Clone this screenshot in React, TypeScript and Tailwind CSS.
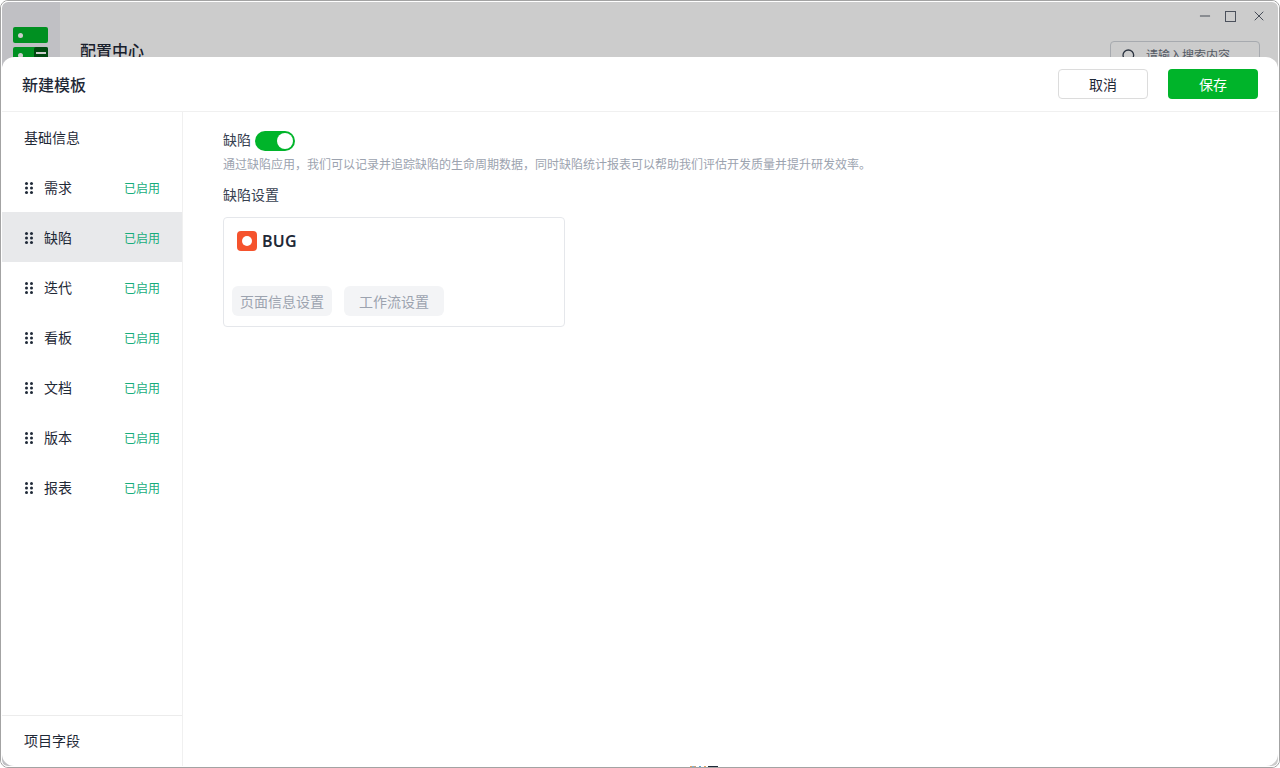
import { Minus, X, Search } from "lucide-react";

const FONT = "font-['Inter','Noto_Sans_CJK_SC',sans-serif]";
const items = ["需求", "缺陷", "迭代", "看板", "文档", "版本", "报表"];

function Grip() {
  return (
    <svg width="10" height="14" viewBox="0 0 10 14" className="mt-[2px] shrink-0 text-[#1f2937]" fill="currentColor">
      <circle cx="2.5" cy="2.5" r="1.5" />
      <circle cx="7.5" cy="2.5" r="1.5" />
      <circle cx="2.5" cy="7" r="1.5" />
      <circle cx="7.5" cy="7" r="1.5" />
      <circle cx="2.5" cy="11.5" r="1.5" />
      <circle cx="7.5" cy="11.5" r="1.5" />
    </svg>
  );
}

export default function App() {
  return (
    <div className={`relative h-[768px] w-[1280px] overflow-hidden bg-white ${FONT}`}>
      {/* Window frame: grey outer line, white inner line */}
      <div className="h-full w-full rounded-[8px] border border-[#a3a3a3]">
        <div className="relative h-full w-full overflow-hidden rounded-[7px] border border-white bg-white">
          {/* Underlying page */}
          <div className="flex h-full w-full">
            <div className="flex w-[58px] shrink-0 flex-col items-center gap-[4px] bg-[#f0f1f5] pr-[2px] pt-[25px]">
              <div className="flex h-[16px] w-[35px] items-center rounded-[2px] bg-[#00b42a] pl-[5px]">
                <span className="h-[5px] w-[5px] rounded-full bg-white" />
              </div>
              <div className="flex h-[16px] w-[35px] items-center justify-between rounded-[2px] bg-[#00b42a] pl-[5px]">
                <span className="h-[5px] w-[5px] rounded-full bg-white" />
                <span className="flex h-[16px] w-[14px] items-start justify-center rounded-[2px] bg-[#005a15] pt-[5px]">
                  <span className="h-[2px] w-[10px] bg-white" />
                </span>
              </div>
            </div>
            <div className="flex min-w-0 flex-1 flex-col">
              <div className="flex h-[21px] items-center justify-end gap-[12px] pr-[11px] pt-[7px] text-[#374151]">
                <Minus size={16} strokeWidth={1.25} />
                <span className="mr-[3px] h-[11px] w-[11px] border border-[#5f6673]" />
                <X size={16} strokeWidth={1.25} />
              </div>
              <div className="flex items-start justify-between pl-[20px] pr-[18px] pt-[16px]">
                <span className="text-[16px] font-medium leading-[24px] text-[#1f2937]">配置中心</span>
                <div className="mt-[2px] flex h-[30px] w-[150px] items-center gap-[9px] rounded-[4px] border border-[#d1d5db] px-[10px]">
                  <Search size={16} className="text-[#374151]" />
                  <span className="text-[12px] text-[#6b7280]">请输入搜索内容</span>
                </div>
              </div>
            </div>
          </div>

          {/* Backdrop and modal */}
          <div className="absolute inset-0 flex flex-col bg-black/20 pt-[55px]">
            <div className="flex min-h-0 flex-1 flex-col overflow-hidden rounded-[12px] bg-white">
              <header className="flex h-[55px] shrink-0 items-center justify-between border-b border-[#f0f0f0] px-[20px]">
                <h1 className="mt-[2px] text-[16px] font-medium text-[#1f2937]">新建模板</h1>
                <div className="flex gap-[20px]">
                  <button className="h-[30px] w-[90px] rounded-[4px] border border-[#dcdcdc] bg-white pt-[1px] text-[14px] text-[#1f2937]">取消</button>
                  <button className="h-[30px] w-[90px] rounded-[4px] bg-[#00b42a] pt-[1px] text-[14px] text-white">保存</button>
                </div>
              </header>
              <div className="flex min-h-0 flex-1">
                <aside className="flex w-[181px] shrink-0 flex-col border-r border-[#f0f0f0]">
                  <div className="flex h-[50px] items-center pl-[22px] pt-[1px] text-[14px] text-[#1f2937]">基础信息</div>
                  <div className="flex flex-col">
                    {items.map((t) => (
                      <div
                        key={t}
                        className={`flex h-[50px] items-center pl-[22px] pr-[22px] ${t === "缺陷" ? "bg-[#e8e9eb]" : ""}`}
                      >
                        <Grip />
                        <span className="ml-[10px] flex-1 text-[14px] text-[#1f2937]">{t}</span>
                        <span className="mt-[4px] text-[12px] text-[#18ad7c]">已启用</span>
                      </div>
                    ))}
                  </div>
                  <div className="mt-auto flex h-[51px] items-center border-t border-[#ececec] pb-[2px] pl-[22px] text-[14px] text-[#1f2937]">项目字段</div>
                </aside>
                <main className="min-w-0 flex-1 pl-[40px] pt-[19px]">
                  <div className="flex h-[20px] items-center">
                    <span className="-mt-[4px] text-[14px] text-[#374151]">缺陷</span>
                    <span className="ml-[4px] flex h-[20px] w-[40px] items-center justify-end rounded-full bg-[#00b42a] pr-[2px]">
                      <span className="h-[16px] w-[16px] rounded-full bg-white" />
                    </span>
                  </div>
                  <p className="mt-[5px] text-[12px] leading-[18px] text-[#9ca3af]">
                    通过缺陷应用，我们可以记录并追踪缺陷的生命周期数据，同时缺陷统计报表可以帮助我们评估开发质量并提升研发效率。
                  </p>
                  <h2 className="mt-[11px] text-[14px] font-normal leading-[20px] text-[#374151]">缺陷设置</h2>
                  <div className="mt-[12px] h-[110px] w-[342px] rounded-[4px] border border-[#e5e7eb] pl-[8px] pt-[13px]">
                    <div className="flex items-center gap-[5px] pl-[5px]">
                      <span className="flex h-[20px] w-[20px] items-center justify-center rounded-[4px] bg-[#f5532d]">
                        <span className="h-[10px] w-[10px] rounded-full bg-white" />
                      </span>
                      <span className="font-['Noto_Sans',sans-serif] text-[16px] font-semibold leading-[20px] tracking-[0.3px] text-[#1f2937]">BUG</span>
                    </div>
                    <div className="mt-[35px] flex gap-[12px]">
                      <button className="h-[30px] w-[100px] rounded-[6px] bg-[#f3f4f6] text-[14px] text-[#9ca3af]">页面信息设置</button>
                      <button className="h-[30px] w-[100px] rounded-[6px] bg-[#f3f4f6] text-[14px] text-[#9ca3af]">工作流设置</button>
                    </div>
                  </div>
                </main>
              </div>
            </div>
          </div>
        </div>
      </div>

      <div className="absolute bottom-[1px] left-[690px] flex h-[1px] w-[28px]">
        <span className="w-[2px] bg-[#e0a060]" />
        <span className="w-[2px] bg-[#7fb3d5]" />
        <span className="w-[2px] bg-[#c9a27a]" />
        <span className="w-[3px] bg-white" />
        <span className="w-[2px] bg-[#5fa8d3]" />
        <span className="w-[3px] bg-white" />
        <span className="w-[2px] bg-[#e0a060]" />
        <span className="w-[2px] bg-white" />
        <span className="w-[10px] bg-[#1f2937]" />
      </div>
    </div>
  );
}
